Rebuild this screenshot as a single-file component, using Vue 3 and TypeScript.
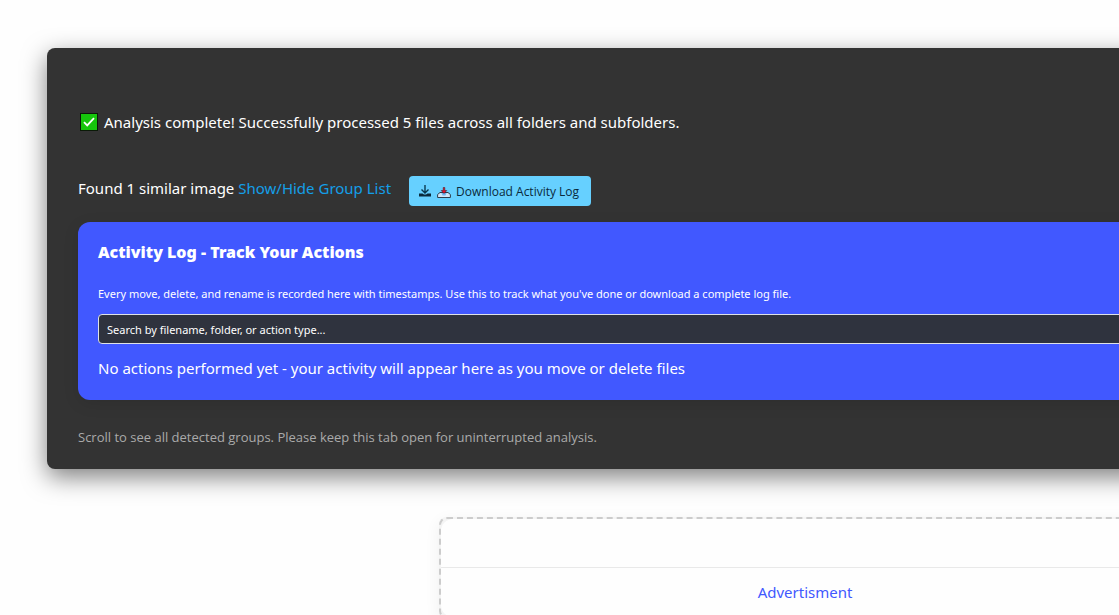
<script setup lang="ts">
import { ref } from 'vue'

const query = ref('')
const showGroups = ref(false)
</script>

<template>
  <main class="page">
    <section class="card">
      <p class="status">
        <svg class="check" viewBox="0 0 18 18" aria-hidden="true">
          <rect width="18" height="18" fill="#0b1a08" />
          <rect x="1" y="1" width="16" height="16" fill="#16c60c" />
          <path d="M4 9.2 7.2 12.4 14 5.2" fill="none" stroke="#fff" stroke-width="1.8" />
        </svg>
        <span>Analysis complete! Successfully processed 5 files across all folders and subfolders.</span>
      </p>

      <div class="found">
        <span>Found 1 similar image
          <a href="#groups" class="toggle" @click.prevent="showGroups = !showGroups">Show/Hide Group List</a></span>
        <button type="button" class="download">
          <svg class="icon" viewBox="0 0 14 16" aria-hidden="true">
            <path d="M7 1V8.500M3.500 5.500 7 9 10.500 5.500" fill="none" stroke="#0a3a50" stroke-width="1.4" />
            <path d="M1 9.500H4.500L6 10.500H8L9.500 9.500H13V12.500H1Z" fill="#0a2a3c" />
          </svg>
          <svg class="icon" viewBox="0 0 14 16" aria-hidden="true">
            <path d="M3 8.500H11L13.400 10.500V13.500H.6V10.500Z" fill="#cfe6f8" stroke="#2c3c4c" stroke-width="1" />
            <path d="M4.500 9H9.500L8.500 11.500H5.500Z" fill="#6fb4ee" />
            <path d="M6.200 3.500H7.800V6.500H9.800L7 9.500 4.200 6.500H6.200Z" fill="#e8112d" stroke="#3a1218" stroke-width=".5" />
          </svg>
          <span>Download Activity Log</span>
        </button>
      </div>

      <section class="log">
        <h2>Activity Log - Track Your Actions</h2>
        <p class="hint">Every move, delete, and rename is recorded here with timestamps. Use this to track what you've done or download a complete log file.</p>
        <input v-model="query" type="text" class="search" aria-label="Search the activity log" placeholder="Search by filename, folder, or action type..." />
        <p class="empty">No actions performed yet - your activity will appear here as you move or delete files</p>
      </section>

      <p class="note">Scroll to see all detected groups. Please keep this tab open for uninterrupted analysis.</p>
    </section>

    <aside class="ad">
      <div class="ad-inner">
        <div class="ad-slot"></div>
        <p class="ad-label">Advertisment</p>
      </div>
    </aside>
  </main>
</template>

<style>
body {
  background: #fefefe;
  overflow: hidden;
}
</style>

<style scoped>
.page {
  font-family: 'Segoe UI', 'Noto Sans', 'Open Sans', sans-serif;
  font-size: 15px;
  line-height: 24px;
  padding-top: 48px;
  overflow: hidden;
}

p,
h2 {
  margin: 0;
}

.card {
  margin: 0 -52px 0 47px;
  padding: 62px 0 20px 31px;
  border-radius: 8px;
  background: #333;
  color: #fff;
  box-shadow: 0 8px 24px rgba(0, 0, 0, 0.5);
}

.status {
  display: flex;
  align-items: center;
  gap: 6px;
  padding-left: 2px;
  white-space: nowrap;
}

.check {
  width: 18px;
  height: 18px;
}

.found {
  display: flex;
  align-items: flex-start;
  gap: 18px;
  margin-top: 42px;
  white-space: nowrap;
}

.toggle {
  color: #149fe8;
  text-decoration: none;
}

.download {
  display: flex;
  align-items: center;
  gap: 5px;
  height: 30px;
  padding: 2px 12px 0 9px;
  border: 0;
  border-radius: 4px;
  background: #66d0ff;
  color: #0a2a3c;
  font: 500 12px/16px 'Segoe UI', 'Open Sans', 'Noto Sans', sans-serif;
  cursor: pointer;
}

.icon {
  width: 14px;
  height: 16px;
}

.log {
  margin-top: 16px;
  padding: 18px 20px 20px;
  border-radius: 12px;
  background: #4158ff;
  box-shadow: 0 4px 16px rgba(0, 0, 0, 0.1);
}

h2 {
  font-size: 16px;
  font-weight: 900;
  line-height: 24px;
}

.hint {
  margin-top: 20px;
  font-size: 11px;
  line-height: 20px;
  white-space: nowrap;
}

.search {
  display: block;
  box-sizing: border-box;
  width: 100%;
  height: 30px;
  margin-top: 10px;
  padding: 0 8px;
  border: 1px solid #dee2e6;
  border-radius: 4px;
  background: #2f333e;
  color: #fff;
  font: 11px/16px 'Segoe UI', 'Noto Sans', 'Open Sans', sans-serif;
}

.search::placeholder {
  color: #fff;
  opacity: 1;
}

.empty {
  margin-top: 12px;
}

.note {
  margin-top: 25px;
  color: #aaa;
  font-family: 'Segoe UI', 'Open Sans', 'Noto Sans', sans-serif;
  font-size: 13px;
}

.ad {
  margin: 48px -52px 0 439px;
  border: 2px dashed #ccc;
  border-radius: 8px;
  background: #f4f4f4;
  box-shadow: 0 4px 16px rgba(0, 0, 0, 0.06);
}

.ad-inner {
  border-radius: 12px;
  background: #fefefe;
}

.ad-slot {
  height: 48px;
  border-bottom: 1px solid #e9e9e9;
}

.ad-label {
  padding: 12px 0 13px;
  color: #4158ff;
  text-align: center;
}
</style>
